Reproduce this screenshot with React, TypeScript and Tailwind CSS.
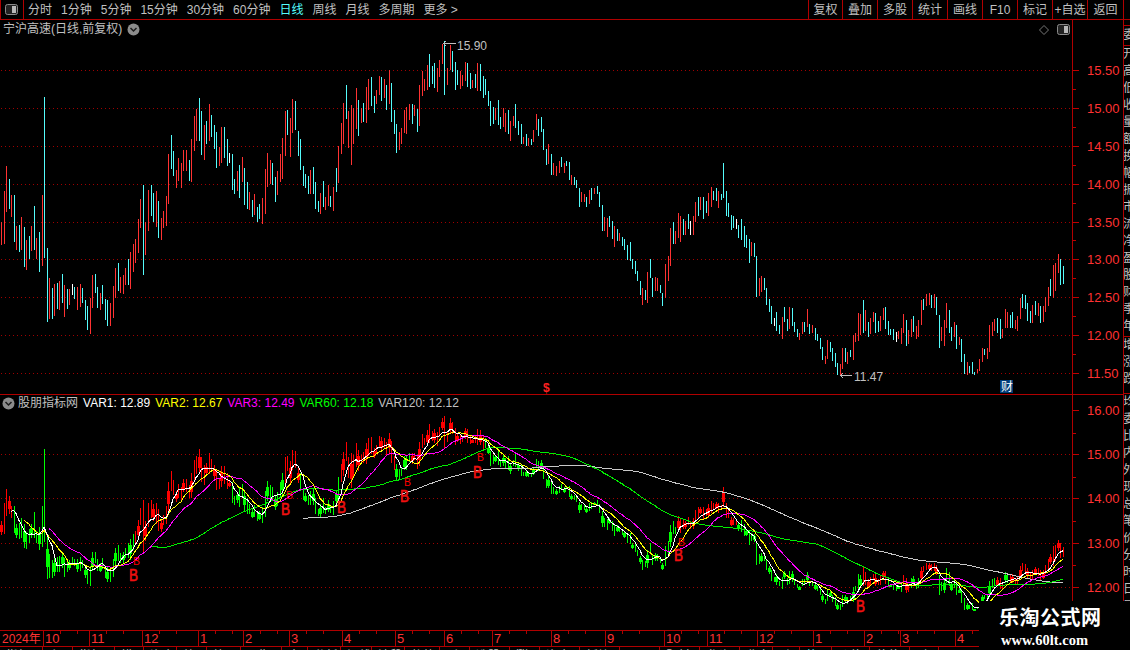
const SEG_A = "4,396,465,r 13,303,462,r 19,228,366,r 28,267,357,c 34,315,381,r 43,315,456,c 49,408,480,r 58,405,486,c 64,381,480,r 73,411,531,c 79,450,540,r 88,438,507,c 94,408,483,r 103,348,480,c 109,444,507,r 118,426,546,c 127,315,528,r 133,21,504,c 142,474,696,c 148,564,687,r 157,594,687,c 163,582,678,r 172,579,657,c 178,573,660,r 187,552,639,c 193,585,681,r 202,597,657,c 208,597,645,r 217,582,615,w 223,591,627,c 232,591,660,r 241,582,651,r 247,594,639,c 256,630,690,c 262,648,720,c 271,624,732,r 277,555,654,r 286,552,609,c 292,591,654,c 301,609,660,r 307,585,642,c 316,627,690,c 322,630,708,c 331,639,708,r 340,588,684,r 346,534,624,r 355,519,603,c 361,561,609,r 370,555,612,r 376,534,585,r 385,507,585,c 391,486,597,r 400,462,546,r 406,447,519,r 415,387,489,r 421,327,414,r 430,285,555,c 436,396,495,r 445,300,423,r 454,285,378,c 460,309,396,c 469,303,411,r 475,333,444,c 484,384,450,r 490,363,414,r 499,318,408,r 505,192,342,r 514,135,237,c 520,183,258,c 529,240,294,r 535,204,273,r 544,219,294,r 550,180,243,r 559,180,243,r 568,210,273,c 574,147,276,r 583,78,183,r 589,57,153,r 598,24,153,c 604,63,195,c 613,105,210,r 619,93,162,c 628,42,153,r 634,75,141,c 643,105,177,c 649,126,234,c 658,171,228,r 664,111,219,r 673,111,204,c 682,147,228,c 688,189,219,w 697,192,300,c 703,267,312,c 712,243,303,r 718,225,324,c 727,201,276,r 733,234,345,c 742,276,357,c 748,306,360,r 757,330,381,c 763,312,375,r 772,351,396,c 778,342,387,c 787,324,402,r 796,237,372,r 802,189,291,r 811,210,282,r 817,219,285,c 826,261,336,c 832,243,315,r 841,192,276,r 847,144,267,r 856,63,198,r 862,60,135,c 871,84,201,r 877,27,129,r 886,33,120,c 895,123,198,c";
const SEG_B = "0,237,330,c 10,318,378,c 16,342,384,c 25,348,402,c 31,330,402,r 40,321,402,c 46,366,447,c 55,423,456,c 61,399,462,r 70,363,441,c 76,411,450,r 85,375,438,r 91,408,441,c 100,381,453,r 109,324,396,c 115,258,369,r 124,189,282,r 130,129,252,r 139,75,177,c 145,153,264,r 154,135,315,r 160,144,252,r 169,84,207,r 175,120,228,c 184,144,189,r 190,129,186,c 199,81,189,r 205,57,150,r 214,51,138,c 223,108,159,c 229,90,132,r 238,48,105,r 244,51,123,c 253,57,114,r 259,75,150,c 268,30,132,r 274,69,186,c 283,150,222,c 289,192,279,c 298,216,270,r 304,204,252,r 313,150,219,r 319,141,222,r 328,132,180,r 337,132,192,c 343,135,168,r 352,147,216,c 358,75,198,r 367,33,108,r 373,57,93,r 382,15,90,r 388,-18,81,c 397,18,72,c 403,9,84,c 412,24,96,r 418,0,51,r 427,-48,12,r 433,-57,105,c 442,24,75,r 451,-45,30,r 457,-27,36,c 466,6,90,c 472,30,75,c 481,33,87,r 487,45,78,r 496,6,63,r 502,9,81,c 511,39,87,c 517,60,84,r 526,42,84,c 532,9,93,r 541,12,93,c 550,48,114,c 556,57,105,c 565,93,138,c 571,123,198,c 580,141,192,c 586,144,180,r 595,120,195,c 601,171,207,c 610,144,201,r 616,159,216,r 625,150,222,c 631,183,243,r 640,168,198,r 646,132,204,c 655,183,225,c 664,192,252,c 670,231,252,r 679,222,258,c 685,234,258,r 694,237,255,c 700,210,246,r 709,162,210,r 715,177,228,c 724,171,216,c 730,207,270,c 739,267,315,c 745,252,312,r 754,282,345,c 760,309,345,r 769,318,348,r 778,303,339,r 784,291,321,c 793,309,339,r 799,303,318,c 808,306,360,c 814,345,375,r 823,351,375,c 829,360,384,c 838,384,441,c 844,396,426,r 853,402,426,r 859,411,441,c 868,390,432,r 874,384,420,c 883,384,402,r 892,378,402,c 898,396,441,c 907,435,513,c 913,471,513,r 922,474,531,r 928,468,501,c 937,483,537,c 943,498,561,r 952,507,543,c 958,519,543,r 967,531,558,c 973,537,570,c 982,555,600,c 991,546,603,c 997,597,627,c 1006,603,642,c 1012,633,663,c 1021,663,705,c 1027,684,735,r 1036,690,720,c 1042,636,729,r 1051,597,654,c 1057,654,711,c 1066,651,693,r 1072,654,693,r 1081,675,699,c 1087,699,738,c 1096,612,714,r 1105,588,663,r 1111,504,618,r 1120,486,552,c 1126,513,552,r 1135,459,534,r";
const SEG_C = "30,168,246,r 39,177,225,c 45,183,225,r 54,162,207,c 60,183,225,w 69,168,225,r 75,126,186,r 84,111,168,c 90,111,150,r 99,111,177,c 108,123,159,c 114,99,168,r 123,81,141,r 129,93,120,c 138,84,123,c 144,93,144,r 153,102,120,c 159,9,114,c 168,93,168,c 174,129,171,c 183,165,210,c 189,168,204,c 198,177,207,w 204,195,234,c 213,177,240,c 222,198,261,c 228,225,264,c 237,237,309,c 243,246,288,r 252,249,291,c 258,288,411,c 267,354,408,r 273,348,396,r 282,354,390,c 288,384,435,c 297,417,456,c 303,438,492,c 312,474,498,w 318,456,513,c 327,495,522,c 336,471,537,r 342,441,486,c 351,477,513,c 357,441,507,r 366,444,498,c 372,486,516,c 381,507,531,c 387,519,540,r 396,486,522,r 402,486,516,c 411,447,501,r 417,492,522,c 426,495,519,r 435,504,540,c 441,522,543,c 450,534,567,c 456,561,600,c 465,588,612,r 471,540,597,r 480,546,576,c 486,564,603,c 495,579,621,c 501,609,645,c 510,612,645,r 516,564,627,r 525,564,606,c 531,576,612,r 540,570,591,c 549,525,600,r 555,519,546,r 564,459,543,r 570,462,525,r 579,420,519,c 585,450,513,r 594,486,531,c 600,474,522,r 609,456,486,r 615,459,519,c 624,483,516,c 630,468,513,r 639,444,480,r 645,441,507,c 654,483,525,c 660,507,525,c 669,507,540,c 678,516,546,w 684,513,537,r 693,504,552,r 699,462,519,r 708,480,558,c 714,510,552,r 723,477,531,r 729,468,516,c 738,498,537,r 744,480,531,r 753,420,495,r 759,417,450,c 768,402,438,r 777,399,435,r 783,405,444,c 792,402,444,r 798,411,465,c 807,465,564,c 813,501,543,r 822,480,558,r 828,429,504,r 837,450,519,c 843,501,543,c 852,486,531,r 858,495,567,c 867,531,555,r 873,537,606,c 882,582,642,c 891,606,645,r 897,618,639,c";
const SEG_D = "36,396,432,c 42,426,435,c 51,417,429,r 57,387,423,r 66,354,396,r 72,357,375,c 81,354,387,r 87,285,366,r 96,276,318,r 102,267,303,r 111,264,309,c 120,267,327,c 126,297,324,r 135,237,294,r 141,246,294,r 150,255,294,c 156,246,294,c 165,270,297,r 171,258,303,r 180,204,267,r 186,192,234,c 195,195,237,c 201,219,273,c 210,243,279,c 216,225,279,r 225,213,255,c 234,219,258,r 240,228,279,c 249,228,276,r 255,201,246,r 264,171,228,r 270,147,198,c 279,105,204,r 285,99,183,r 294,72,129,r 300,87,165,c 309,108,162,c";

type Bar = { x: number; t: number; b: number; c: string };

function parse(s: string, x0: number, y0: number): Bar[] {
  return s.split(" ").map((g) => {
    const [x, t, b, c] = g.split(",");
    return { x: x0 + Math.floor(+x / 3), t: y0 + Math.round(+t / 3), b: y0 + Math.round(+b / 3), c };
  });
}

const BARS: Bar[] = [...parse(SEG_A, 0, 90), ...parse(SEG_B, 300, 60), ...parse(SEG_C, 670, 160), ...parse(SEG_D, 960, 230)];

const Y_P = (y: number) => 15.5 - (y - 70) / 75.7;
const LOW_Y = (p: number) => 411 + (16 - p) * 44;
const toLow = (y: number) => LOW_Y(Y_P(y));

const closes = BARS.map((d) => {
  const h = d.b - d.t;
  const y = d.c === "r" ? d.t + h * 0.35 : d.c === "c" ? d.b - h * 0.35 : (d.t + d.b) / 2;
  return Y_P(y);
});

function maPoints(n: number) {
  const pts: string[] = [];
  for (let i = n - 1; i < BARS.length; i++) {
    let s = 0;
    for (let j = i - n + 1; j <= i; j++) s += closes[j];
    pts.push(`${BARS[i].x},${LOW_Y(s / n).toFixed(1)}`);
  }
  return pts.join(" ");
}

// x ranges of the lower pane whose candles are red; everything else is green
const RED_ZONES: [number, number][] = [[0, 14], [135, 232], [283, 300], [340, 395], [410, 484], [676, 738], [862, 888], [903, 910], [920, 937], [997, 1003], [1010, 1070]];
const isRedZone = (x: number) => RED_ZONES.some(([a, b]) => x >= a && x < b);

const UP_COLOR: Record<string, string> = { r: "#ff3232", c: "#54fcfc", w: "#ffffff" };
const UP_GRID = [70, 108, 146, 184, 222, 259, 297, 335, 373];
const LOW_GRID = [454, 498, 543, 587];
const UP_LABELS = ["15.50", "15.00", "14.50", "14.00", "13.50", "13.00", "12.50", "12.00", "11.50"];
const LOW_LABELS: [string, number][] = [["16.00", 410], ["15.00", 454], ["14.00", 498], ["13.00", 543], ["12.00", 587]];

const PERIODS = ["分时", "1分钟", "5分钟", "15分钟", "30分钟", "60分钟", "日线", "周线", "月线", "多周期", "更多 >"];
const TOOLS = ["复权", "叠加", "多股", "统计", "画线", "F10", "标记", "+自选", "返回"];
const MONTHS: [string, number][] = [["10", 43], ["11", 89], ["12", 142], ["1", 198], ["2", 243], ["3", 289], ["4", 342], ["5", 395], ["6", 444], ["7", 492], ["8", 551], ["9", 605], ["10", 664], ["11", 707], ["12", 757], ["1", 813], ["2", 864], ["3", 900], ["4", 955]];
const TABS: [string, number][] = [["指标", 43], ["主图", 30], ["指标", 42], ["模板", 29], ["资金", 33], ["统计", 30], ["筹码", 34], ["周期", 41], ["大盘", 26], ["分析", 33], ["短线", 31], ["波段", 33], ["趋势", 35], ["形态", 30], ["选股", 40], ["涨停", 30], ["资金", 40], ["板块", 40], ["风口", 40], ["题材", 40], ["龙头", 40], ["北向", 33], ["融资", 27], ["格局", 32], ["价值", 38], ["估值", 40], ["财务", 29]];
const RIGHT_ROWS = ["开", "高", "低", "收", "量", "额", "换", "幅", "振", "市", "流", "净", "盈", "股", "财", "季", "年", "增", "涨", "跌", "均", "委", "比", "内", "外", "现", "总", "笔", "价", "分", "时", "日", "周", "月"];

function Chevron() {
  return (
    <svg width="13" height="13" viewBox="0 0 13 13" className="shrink-0">
      <circle cx="6.5" cy="6.5" r="6" fill="#8c8c8c" />
      <path d="M3.5 5 L6.5 8 L9.5 5" fill="none" stroke="#1c1c1c" strokeWidth="1.5" />
    </svg>
  );
}

function PanelIcon() {
  return (
    <svg width="13" height="11" viewBox="0 0 13 11" className="shrink-0">
      <rect x="0.5" y="0.5" width="12" height="10" rx="2" fill="#222" stroke="#8a8a8a" />
      <rect x="7" y="2" width="4" height="7" fill="#b8b8b8" />
    </svg>
  );
}

function UpperChart() {
  return (
    <svg width="1072" height="374" viewBox="0 20 1072 374" className="block">
      {UP_GRID.map((y) => (
        <line key={y} x1="1" x2="1072" y1={y + 0.5} y2={y + 0.5} stroke="#a00000" strokeDasharray="1 3" />
      ))}
      {BARS.map((d, i) => (
        <rect key={i} x={d.x} y={d.t} width="1" height={d.b - d.t} fill={UP_COLOR[d.c]} shapeRendering="crispEdges" />
      ))}
      <path d="M443 43.5 H456 M443 43.5 l3 -2 M443 43.5 l3 2" stroke="#c0c0c0" fill="none" shapeRendering="crispEdges" />
      <text x="457" y="50" fontSize="12" fill="#c0c0c0">15.90</text>
      <path d="M840 375.5 H852 M840 375.5 l3 -2 M840 375.5 l3 2" stroke="#c0c0c0" fill="none" shapeRendering="crispEdges" />
      <text x="854" y="381" fontSize="12" fill="#c0c0c0">11.47</text>
      <text x="543" y="392" fontSize="12" fontWeight="700" fill="#ff2020">$</text>
      <rect x="1000" y="380" width="13" height="13" fill="#003c78" />
      <text x="1001" y="391" fontSize="12" fill="#ffffff">财</text>
    </svg>
  );
}

function LowerChart() {
  const Bs: [number, number][] = [[129, 581], [281, 515], [337, 513], [400, 502], [473, 478], [674, 561], [856, 612]];
  const bs: [number, number][] = [[133, 565], [286, 499], [404, 486], [477, 461], [678, 546]];
  return (
    <svg width="1072" height="235" viewBox="0 395 1072 235" className="block">
      {LOW_GRID.map((y) => (
        <line key={y} x1="1" x2="1072" y1={y + 0.5} y2={y + 0.5} stroke="#a00000" strokeDasharray="1 3" />
      ))}
      <g shapeRendering="crispEdges">
        {BARS.map((d, i) => {
          const t = Math.round(toLow(d.t));
          const b = Math.round(toLow(d.b));
          const h = b - t;
          const col = isRedZone(d.x) ? "#ff0000" : "#00ff00";
          const top = t + Math.round(h * 0.3);
          const bh = Math.max(1, Math.round(h * 0.4));
          return (
            <g key={i}>
              <rect x={d.x} y={t} width="1" height={h} fill={col} />
              {i % 3 === 0 && <rect x={d.x - 0.5} y={top + 0.5} width="2" height={bh} fill="none" stroke={col} />}
            </g>
          );
        })}
      </g>
      <g fill="none" shapeRendering="crispEdges">
        <polyline points={maPoints(120)} stroke="#c8c8c8" />
        <polyline points={maPoints(60)} stroke="#00ee00" />
        <polyline points={maPoints(20)} stroke="#ff00ff" />
        <polyline points={maPoints(10)} stroke="#ffff00" />
        <polyline points={maPoints(5)} stroke="#ffffff" />
      </g>
      {bs.map(([x, y], i) => (
        <text key={i} x={x} y={y} fontSize="11" fill="#ff0000" textLength={7} lengthAdjust="spacingAndGlyphs">B</text>
      ))}
      {Bs.map(([x, y], i) => (
        <text key={i} x={x} y={y} fontSize="16" fill="#f01010" stroke="#f01010" strokeWidth="0.6" textLength={9} lengthAdjust="spacingAndGlyphs">B</text>
      ))}
    </svg>
  );
}

function Axis({ labels, h, vb, mids }: { labels: [string, number][]; h: number; vb: number; mids: number[] }) {
  return (
    <svg width="50" height={h} viewBox={`1073 ${vb} 50 ${h}`} className="block">
      {labels.map(([l, y]) => (
        <g key={l}>
          <rect x="1073" y={y} width="6" height="1" fill="#c00000" />
          <text x="1087" y={y + 5} fontSize="13" fill="#ff3232">{l}</text>
        </g>
      ))}
      {mids.map((y) => (
        <rect key={y} x="1073" y={y} width="3" height="1" fill="#c00000" />
      ))}
    </svg>
  );
}

export default function App() {
  return (
    <div className="relative flex h-[650px] w-[1130px] flex-col overflow-hidden bg-black font-['Liberation_Sans','Noto_Sans_CJK_SC',sans-serif] text-[12px] text-[#c0c0c0]">
      <header className="flex h-[20px] shrink-0 items-center border-b border-[#b00000]">
        <div className="flex h-full w-[24px] items-center border-x border-[#b00000] pl-[4px]">
          <PanelIcon />
        </div>
        <nav className="ml-[4px] flex gap-[9px] whitespace-nowrap">
          {PERIODS.map((p) => (
            <span key={p} className={p === "日线" ? "text-[#54fcfc]" : ""}>{p}</span>
          ))}
        </nav>
        <div className="ml-auto mr-[6px] flex h-full border-r border-[#b00000]">
          {TOOLS.map((t, i) => (
            <span key={t} className={`flex h-full items-center justify-center border-l border-[#b00000] whitespace-nowrap ${i === 0 ? "w-[34px]" : i === 8 ? "w-[36px]" : "w-[35px]"}`}>{t}</span>
          ))}
        </div>
      </header>

      <div className="flex min-h-0 flex-1">
        <div className="flex w-[1123px] shrink-0 flex-col">
          <section className="relative flex h-[375px] shrink-0 border-b border-[#b00000]">
            <div className="relative w-[1072px] shrink-0">
              <UpperChart />
              <div className="absolute left-[3px] top-[2px] flex items-center gap-[5px]">
                <span className="whitespace-nowrap leading-[14px]">宁沪高速(日线,前复权)</span>
                <Chevron />
              </div>
              <svg width="10" height="10" viewBox="0 0 10 10" className="absolute left-[1039px] top-[5px]">
                <path d="M5 0.5 L9.5 5 L5 9.5 L0.5 5 Z" fill="none" stroke="#777" />
              </svg>
              <div className="absolute left-[1057px] top-[4px]">
                <PanelIcon />
              </div>
            </div>
            <div className="w-[51px] shrink-0 border-l border-[#b00000]">
              <Axis labels={UP_LABELS.map((l, i) => [l, UP_GRID[i]])} h={374} vb={20} mids={[89, 127, 165, 203, 240, 278, 316, 354]} />
            </div>
          </section>

          <section className="relative flex h-[235px] shrink-0">
            <div className="relative w-[1072px] shrink-0">
              <LowerChart />
              <div className="absolute left-[2px] top-[1px] flex items-center gap-[5px] whitespace-nowrap leading-[14px]">
                <Chevron />
                <span className="-ml-[2px]">股朋指标网</span>
                <span className="text-white">VAR1: 12.89</span>
                <span className="text-[#ffff00]">VAR2: 12.67</span>
                <span className="text-[#ff00ff]">VAR3: 12.49</span>
                <span className="text-[#00ff00]">VAR60: 12.18</span>
                <span className="text-[#c0c0c0]">VAR120: 12.12</span>
              </div>
            </div>
            <div className="w-[51px] shrink-0 border-l border-[#b00000]">
              <Axis labels={LOW_LABELS} h={235} vb={395} mids={[433, 477, 521, 565, 609]} />
            </div>
          </section>

          <section className="h-[17px] shrink-0 border-y border-[#b00000]">
            <svg width="1123" height="15" viewBox="0 631 1123 15" className="block">
              <text x="2" y="643" fontSize="12" fill="#ff3232">2024年</text>
              {MONTHS.map(([m, x], i) => (
                <g key={i}>
                  <rect x={x} y="631" width="1" height="15" fill="#b00000" />
                  <rect x={x + 17} y="631" width="1" height="3" fill="#b00000" />
                  <rect x={x + 34} y="631" width="1" height="3" fill="#b00000" />
                  <text x={x + 2} y="643" fontSize="13" fill="#ff3232">{m}</text>
                </g>
              ))}
            </svg>
          </section>

          <footer className="flex h-[3px] shrink-0 overflow-hidden">
            {TABS.map(([t, w], i) => (
              <span key={i} style={{ width: w }} className={`shrink-0 border-r border-[#b00000] pl-[6px] pt-[2px] leading-[14px] ${i === 23 ? "text-[#54fcfc]" : ""}`}>{t}</span>
            ))}
          </footer>
        </div>

        <aside className="flex w-[7px] shrink-0 flex-col overflow-hidden border-l border-[#b00000]">
          <div className="h-[6px] shrink-0 border-b border-[#b00000]" />
          <div className="h-[20px] shrink-0 overflow-hidden border-b border-[#b00000] leading-[18px]"><div className="-ml-[1px]">委</div></div>
          <div className="h-[291px] shrink-0 overflow-hidden border-b border-[#b00000]">
            {RIGHT_ROWS.slice(0, 17).map((r, i) => (
              <div key={i} className="-ml-[1px] leading-[17px]">{r}</div>
            ))}
          </div>
          <div className="h-[57px] shrink-0 overflow-hidden border-b border-[#b00000]">
            {RIGHT_ROWS.slice(17, 20).map((r, i) => (
              <div key={i} className="-ml-[1px] leading-[17px]">{r}</div>
            ))}
          </div>
          <div className="min-h-0 flex-1 overflow-hidden">
            {RIGHT_ROWS.slice(20).map((r, i) => (
              <div key={i} className="-ml-[1px] leading-[17px]">{r}</div>
            ))}
          </div>
        </aside>
      </div>

      <div className="absolute bottom-0 right-0 flex h-[49px] w-[151px] flex-col items-start bg-black pl-[20px]">
        <span className="mt-[5px] whitespace-nowrap text-[20px] font-bold leading-[24px] tracking-[0.5px] text-white">乐淘公式网</span>
        <span className="ml-[2px] mt-[3px] whitespace-nowrap font-['Liberation_Serif',serif] text-[14.5px] font-bold leading-[15px] text-white">www.60lt.com</span>
      </div>
    </div>
  );
}
